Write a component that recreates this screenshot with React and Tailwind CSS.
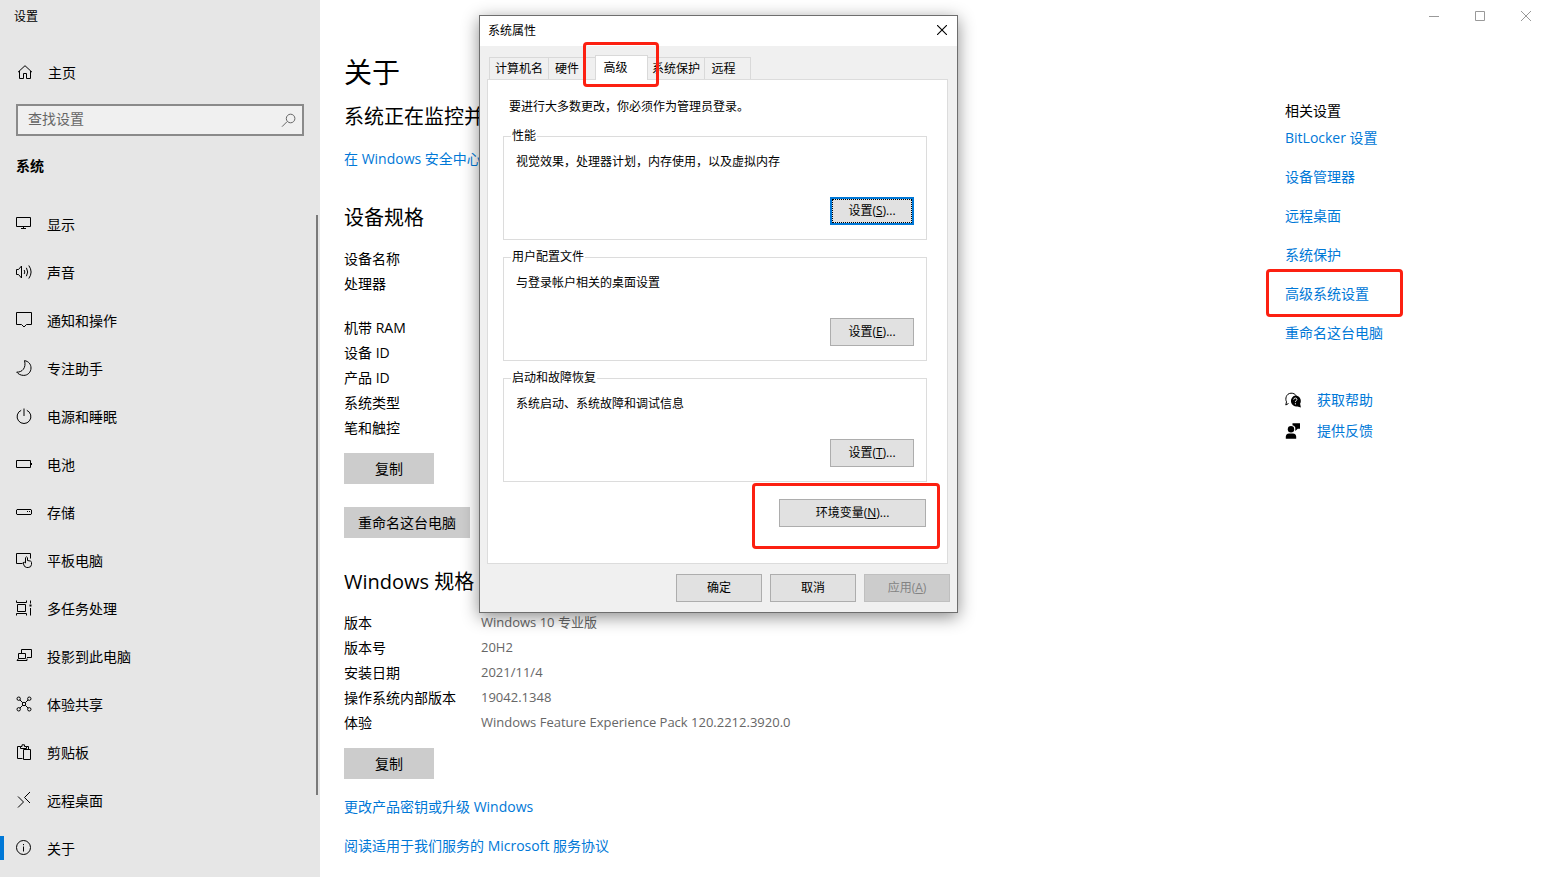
const sideItems = [
  { label: "显示", icon: "display" },
  { label: "声音", icon: "sound" },
  { label: "通知和操作", icon: "notify" },
  { label: "专注助手", icon: "moon" },
  { label: "电源和睡眠", icon: "power" },
  { label: "电池", icon: "battery" },
  { label: "存储", icon: "storage" },
  { label: "平板电脑", icon: "tablet" },
  { label: "多任务处理", icon: "multitask" },
  { label: "投影到此电脑", icon: "project" },
  { label: "体验共享", icon: "share" },
  { label: "剪贴板", icon: "clipboard" },
  { label: "远程桌面", icon: "remote" },
  { label: "关于", icon: "info", active: true },
];

const windowsSpecs = [
  ["版本", "Windows 10 专业版"],
  ["版本号", "20H2"],
  ["安装日期", "2021/11/4"],
  ["操作系统内部版本", "19042.1348"],
  ["体验", "Windows Feature Experience Pack 120.2212.3920.0"],
];

const relatedLinks = [
  { label: "BitLocker 设置" },
  { label: "设备管理器" },
  { label: "远程桌面" },
  { label: "系统保护" },
  { label: "高级系统设置", marked: true },
  { label: "重命名这台电脑" },
];

const groups = [
  { title: "性能", text: "视觉效果，处理器计划，内存使用，以及虚拟内存", accessKey: "S", focused: true },
  { title: "用户配置文件", text: "与登录帐户相关的桌面设置", accessKey: "E" },
  { title: "启动和故障恢复", text: "系统启动、系统故障和调试信息", accessKey: "T" },
];

const icons = {
  home: <path d="M1 8.2 8 1.7l7 6.500M2.500 7v7.500h4V9.500h3v5h4V7" />,
  display: <path d="M.5 1.500h14v9H.5zM7.500 10.500v2M5 12.500h5" />,
  sound: (
    <path d="M.5 5.500h2l3-3.500v12l-3-3.500h-2zM8.200 6q1.200 2 0 4M10.400 3.800q2.600 4.200 0 8.400M12.800 1.500q4.600 6.500 0 13" />
  ),
  notify: <path d="M.5.500h15v12h-5l-2.500 2.500-2.500-2.500h-5z" />,
  moon: <path d="M8.500.6c4 .7 6.500 3.500 6.500 7.400 0 4.200-3.200 7.400-7.300 7.400-3 0-5.400-1.300-7-3.300C6 12.500 10.500 8 8.500.6z" />,
  power: <path d="M8 .5v7.500M5.200 2.300a6.900 6.900 0 1 0 5.600 0" />,
  battery: <path d="M.5 4.500h14v7H.5zM15.500 7v2" />,
  storage: <path d="M1 5.500h14l.5.500v4l-.5.500H1l-.5-.5V6zM11 7.500h1M13 7.500h1" />,
  tablet: (
    <path d="M6.500 11.500h-6v-10h14v5M9.500 11V5.700q1-1.700 2 0V8.500l3 .6q1 .4 1 1.400v2q-.3 3-3.300 3h-1.500q-2.700-.3-3.200-3.500l-.4-1.500 1.400-.2z" />
  ),
  multitask: (
    <>
      <path d="M.5.500v2h10v-2M1.500 4.500h8v7h-8zM.5 15.500v-2h10v2M14.500.500v3M14.500 8v7.500" />
      <path d="M13.500 4.500h2v2h-2z" fill="currentColor" stroke="none" />
    </>
  ),
  project: <path d="M5.500 5V1.500h10v8H11M2.500 5.500h7v5h-7zM2.500 10.500l-1.500 2h10v-2" />,
  share: (
    <>
      <circle cx="2.700" cy="2.700" r="1.700" />
      <circle cx="13.300" cy="2.700" r="1.700" />
      <circle cx="2.700" cy="13.300" r="1.700" />
      <circle cx="13.300" cy="13.300" r="1.700" />
      <circle cx="8" cy="8" r="1.700" />
      <path d="m4 4 2.800 2.800M12 4 9.200 6.800M4 12l2.800-2.800M12 12 9.200 9.200" />
    </>
  ),
  clipboard: <path d="M6.500 14.500h-5v-12h3v2h6v-2h2v3M4.500 2.500h1.500V.8h2.500v1.700h2M7.500 5.500h7v10h-7z" />,
  remote: <path d="m2 4.500 5.500 5.500-5.500 5.500M14 0 8.500 5.500l5.500 5.500" />,
  info: (
    <>
      <circle cx="7.500" cy="7.500" r="7" />
      <path d="M7.500 6.500v5M7.500 4v1.200" />
    </>
  ),
  search: <path d="M6.200 9.500 1 14.700M5.300 6.500a4.300 4.300 0 1 0 8.600 0 4.300 4.300 0 1 0-8.600 0" />,
  help: (
    <>
      <path d="M3.500 11.500.8 13l.7-3.200C0 7 1 1.500 6 1.200c2.500-.1 4.300 1 5.200 2.600" />
      <path
        d="M10.300 3.600a5.500 5.500 0 0 1 4.800 8.200l.8 3.700-3.400-1.100a5.500 5.500 0 1 1-2.200-10.800z"
        fill="currentColor"
        stroke="none"
      />
      <path d="M8.700 7.600q.2-1.600 1.700-1.600 1.500.1 1.500 1.400c0 1.200-1.500 1.200-1.500 2.700M10.400 11.200v1.200" stroke="#fff" />
    </>
  ),
  feedback: (
    <g fill="currentColor" stroke="none">
      <circle cx="6" cy="6.200" r="3.200" />
      <path d="M.8 15.800v-2.300q.4-3 3.200-3h4q2.800 0 3.200 3v2.300zM7.500.3H15v5.400h-2.300L10.300 8V4.500q-.6-1.900-2.800-2.200z" />
    </g>
  ),
};

function Icon({ name, className = "" }) {
  return (
    <svg
      viewBox="0 0 16 16"
      className={`h-4 w-4 shrink-0 overflow-visible ${className}`}
      fill="none"
      stroke="currentColor"
      aria-hidden="true"
    >
      {icons[name]}
    </svg>
  );
}

function Sidebar() {
  return (
    <aside className="flex h-screen w-80 shrink-0 flex-col overflow-hidden bg-[#e6e6e6]">
      <div className="px-3.5 pt-[9px] text-xs leading-4">设置</div>
      <a href="#home" className="mt-[23px] flex h-12 items-center gap-[15px] pl-[17px]">
        <Icon name="home" />
        <span className="pt-0.5">主页</span>
      </a>
      <label className="mx-4 mt-2 flex h-8 shrink-0 items-center border-2 border-[#8a8a8a] bg-[#f0f0f0] px-2.5">
        <input
          type="text"
          aria-label="查找设置"
          placeholder="查找设置"
          className="min-w-0 flex-1 bg-transparent pb-0.5 outline-none placeholder:text-[#666]"
        />
        <Icon name="search" className="-mr-[5px] text-[#666]" />
      </label>
      <h2 className="mt-5 mb-6 px-4 leading-5 font-bold">系统</h2>
      <div className="flex min-h-0 flex-1">
        <nav className="flex-1">
          {sideItems.map((item) => (
            <a key={item.label} href={`#${item.icon}`} className="flex h-12 items-center">
              <span className={`h-6 w-1 ${item.active ? "bg-[#0078d7]" : ""}`} />
              <Icon name={item.icon} className="mr-[15px] ml-3" />
              <span className="pt-0.5">{item.label}</span>
            </a>
          ))}
        </nav>
        <div className="mt-[15px] mr-0.5 h-[580px] w-0.5 bg-[#7a7a7a]" />
      </div>
    </aside>
  );
}

function GrayButton({ children, className = "" }) {
  return (
    <button type="button" className={`block h-[31px] bg-[#ccc] text-center ${className}`}>
      {children}
    </button>
  );
}

function AboutContent() {
  return (
    <section className="min-w-0 flex-1 pt-[22px] whitespace-nowrap">
      <h1 className="text-[28px] leading-9">关于</h1>
      <p className="mt-[11px] text-xl leading-8">系统正在监控并</p>
      <a href="#security" className="mt-3.5 block leading-6 text-[#0078d7]">
        在 Windows 安全中心
      </a>

      <h2 className="mt-[31px] text-xl leading-8">设备规格</h2>
      <dl className="mt-3 leading-[25px]">
        <dt>设备名称</dt>
        <dt className="mb-[19px]">处理器</dt>
        <dt>机带 RAM</dt>
        <dt>设备 ID</dt>
        <dt>产品 ID</dt>
        <dt>系统类型</dt>
        <dt>笔和触控</dt>
      </dl>
      <GrayButton className="mt-[13px] w-[90px]">复制</GrayButton>
      <GrayButton className="mt-[23px] w-[126px]">重命名这台电脑</GrayButton>

      <h2 className="mt-7 text-xl leading-8">Windows 规格</h2>
      <dl className="mt-3 grid grid-cols-[137px_1fr] leading-[25px]">
        {windowsSpecs.map(([name, value]) => (
          <div key={name} className="contents">
            <dt>{name}</dt>
            <dd className="text-[13px] text-[#666]">{value}</dd>
          </div>
        ))}
      </dl>
      <GrayButton className="mt-[13px] w-[90px]">复制</GrayButton>
      <a href="#upgrade" className="mt-4 block leading-6 text-[#0078d7]">
        更改产品密钥或升级 Windows
      </a>
      <a href="#agreement" className="mt-[15px] block leading-6 text-[#0078d7]">
        阅读适用于我们服务的 Microsoft 服务协议
      </a>
    </section>
  );
}

function RelatedSettings() {
  return (
    <section className="w-[264px] shrink-0 pt-[69px]">
      <h3 className="leading-5">相关设置</h3>
      <ul className="mt-[7px] flex flex-col gap-[19px] text-[#0078d7]">
        {relatedLinks.map((link) => (
          <li key={link.label} className="relative leading-5">
            <a href="#related">{link.label}</a>
            {link.marked && (
              <span className="pointer-events-none absolute -top-[15px] -left-[19px] h-12 w-[137px] rounded-sm border-3 border-[#fc2011]" />
            )}
          </li>
        ))}
      </ul>
      <div className="mt-[47px] flex flex-col gap-[11px] leading-5">
        <a href="#help" className="flex items-center gap-4">
          <Icon name="help" />
          <span className="text-[#0078d7]">获取帮助</span>
        </a>
        <a href="#feedback" className="flex items-center gap-4">
          <Icon name="feedback" />
          <span className="text-[#0078d7]">提供反馈</span>
        </a>
      </div>
    </section>
  );
}

function WindowControls() {
  return (
    <div className="flex h-8 justify-end text-[#999]">
      <button type="button" aria-label="最小化" className="flex w-[46px] items-center justify-center">
        <svg viewBox="0 0 10 10" className="h-2.5 w-2.5" fill="none" stroke="currentColor">
          <path d="M0 5.500h10" />
        </svg>
      </button>
      <button type="button" aria-label="最大化" className="flex w-[46px] items-center justify-center">
        <svg viewBox="0 0 10 10" className="h-2.5 w-2.5" fill="none" stroke="currentColor">
          <path d="M.5.500h9v9h-9z" />
        </svg>
      </button>
      <button type="button" aria-label="关闭" className="flex w-[46px] items-center justify-center">
        <svg viewBox="0 0 10 10" className="h-2.5 w-2.5" fill="none" stroke="currentColor">
          <path d="m0 0 10 10M10 0 0 10" />
        </svg>
      </button>
    </div>
  );
}

function DialogButton({ children, className = "", focused = false, disabled = false }) {
  let look = "border border-[#adadad] bg-[#e1e1e1]";
  if (focused) look = "border-2 border-[#0078d7] bg-[#e1e1e1]";
  if (disabled) look = "border border-[#bfbfbf] bg-[#ccc] text-[#838383]";
  return (
    <button type="button" disabled={disabled} className={`h-7 ${look} ${className}`}>
      <span
        className={
          focused
            ? "flex h-full items-center justify-center border border-dotted border-black"
            : "flex h-full items-center justify-center"
        }
      >
        <span>{children}</span>
      </span>
    </button>
  );
}

function SystemProperties() {
  return (
    <div
      role="dialog"
      aria-label="系统属性"
      className="absolute top-[15px] left-[479px] w-[479px] border border-[#6e6e6e] bg-[#f0f0f0] text-xs leading-4 whitespace-nowrap shadow-[0_4px_16px_rgba(0,0,0,0.45)]"
    >
      <div className="flex h-[30px] items-center justify-between bg-white pr-[9px] pl-2">
        <span>系统属性</span>
        <button type="button" aria-label="关闭" className="pr-px pb-0.5">
          <svg viewBox="0 0 10 10" className="h-2.5 w-2.5" fill="none" stroke="currentColor" strokeWidth="1.1">
            <path d="m0 0 10 10M10 0 0 10" />
          </svg>
        </button>
      </div>

      <div className="relative mt-2 flex h-[25px] items-end pl-[9px]" role="tablist">
        <button type="button" role="tab" className="h-[22px] w-[60px] border border-b-0 border-[#d9d9d9]">
          计算机名
        </button>
        <button type="button" role="tab" className="h-[22px] w-[46px] border-t border-[#d9d9d9] pr-2.5">
          硬件
        </button>
        <button
          type="button"
          role="tab"
          aria-selected="true"
          className="z-10 -mb-px h-[25px] w-[53px] border border-b-0 border-[#d9d9d9] bg-white pr-3"
        >
          高级
        </button>
        <button type="button" role="tab" className="h-[22px] w-[57px] border-t border-r border-[#d9d9d9]">
          系统保护
        </button>
        <button type="button" role="tab" className="h-[22px] w-[46px] border-t border-r border-[#d9d9d9] pr-2">
          远程
        </button>
        <span className="pointer-events-none absolute -top-3 left-[103px] z-20 h-[45px] w-[76px] rounded-sm border-3 border-[#fc2011]" />
      </div>

      <div className="mr-[9px] ml-[7px] border border-[#dcdcdc] bg-white px-[15px] pt-[19px] pb-9">
        <p className="pl-1.5">要进行大多数更改，你必须作为管理员登录。</p>
        <div className="mt-[13px] mr-[5px] flex flex-col gap-[9px]">
          {groups.map((group) => (
            <fieldset key={group.title} className="h-28 border border-[#dcdcdc] px-3">
              <legend className="-ml-[5px] px-px">{group.title}</legend>
              <p className="mt-2.5">{group.text}</p>
              <div className="mt-[27px] flex justify-end">
                <DialogButton focused={group.focused} className="w-[84px]">
                  设置(<u>{group.accessKey}</u>)...
                </DialogButton>
              </div>
            </fieldset>
          ))}
        </div>
        <div className="relative mt-[17px] mr-1.5 flex justify-end">
          <DialogButton className="w-[147px]">
            环境变量(<u>N</u>)...
          </DialogButton>
          <span className="pointer-events-none absolute -top-4 -right-3.5 h-[66px] w-[188px] rounded-sm border-3 border-[#fc2011]" />
        </div>
      </div>

      <div className="flex justify-end gap-2 py-2.5 pr-[7px]">
        <DialogButton className="w-[86px]">确定</DialogButton>
        <DialogButton className="w-[86px]">取消</DialogButton>
        <DialogButton className="w-[86px]" disabled>
          应用(<u>A</u>)
        </DialogButton>
      </div>
    </div>
  );
}

export default function App() {
  return (
    <div className="relative flex h-screen overflow-hidden bg-white font-['Open_Sans','Noto_Sans_CJK_SC',sans-serif] text-sm text-black">
      <Sidebar />
      <main className="flex min-w-0 flex-1 flex-col">
        <WindowControls />
        <div className="flex pl-6">
          <AboutContent />
          <RelatedSettings />
        </div>
      </main>
      <SystemProperties />
    </div>
  );
}
